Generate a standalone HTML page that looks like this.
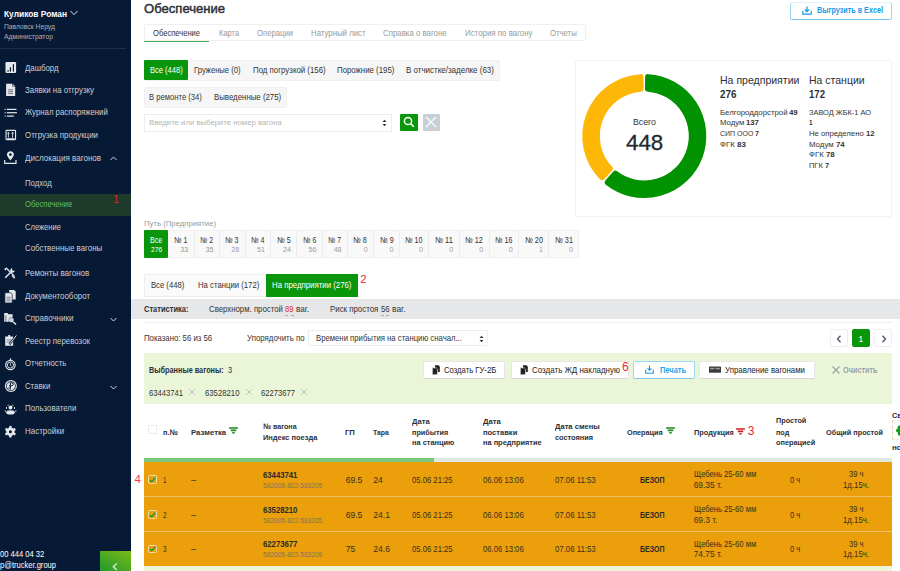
<!DOCTYPE html>
<html><head><meta charset="utf-8"><title>Обеспечение</title>
<style>
html,body{margin:0;padding:0;width:900px;height:571px;overflow:hidden;background:#fff;}
body{position:relative;font-family:"Liberation Sans",sans-serif;}
body>div,body>svg{position:absolute;}
.t{white-space:pre;}
.c{text-align:center;}
</style></head><body>
<div style="left:0.00px;top:0.00px;width:131.00px;height:571.00px;background:#071a35;"></div>
<div class="t" style="left:4.00px;top:8.81px;font-size:9.80px;line-height:9.80px;color:#ffffff;font-weight:bold;transform:scaleX(0.8548);transform-origin:0 0;">Куликов Роман</div>
<svg style="left:70px;top:10px" width="8" height="6" viewBox="0 0 8 6"><path d="M0.5 1 L4 4.6 L7.5 1" fill="none" stroke="#fff" stroke-width="0.9"/></svg>
<div class="t" style="left:4.00px;top:22.91px;font-size:7.26px;line-height:7.26px;color:#aab1bc;transform:scaleX(0.9313);transform-origin:0 0;">Павловск Неруд</div>
<div class="t" style="left:4.00px;top:33.11px;font-size:7.26px;line-height:7.26px;color:#aab1bc;transform:scaleX(0.9354);transform-origin:0 0;">Администратор</div>
<div style="left:0.00px;top:48.00px;width:126.00px;height:1.00px;background:#1f2d47;"></div>
<div style="left:0.00px;top:193.70px;width:131.00px;height:22.00px;background:#1e3a2b;"></div>
<div class="t" style="left:24.70px;top:63.50px;font-size:8.80px;line-height:8.80px;color:#c9ced6;transform:scaleX(0.8918);transform-origin:0 0;">Дашборд</div>
<div class="t" style="left:24.70px;top:86.00px;font-size:8.80px;line-height:8.80px;color:#c9ced6;transform:scaleX(0.9023);transform-origin:0 0;">Заявки на отгрузку</div>
<div class="t" style="left:24.70px;top:108.41px;font-size:8.80px;line-height:8.80px;color:#c9ced6;transform:scaleX(0.8862);transform-origin:0 0;">Журнал распоряжений</div>
<div class="t" style="left:24.70px;top:130.60px;font-size:8.80px;line-height:8.80px;color:#c9ced6;transform:scaleX(0.8977);transform-origin:0 0;">Отгрузка продукции</div>
<div class="t" style="left:24.70px;top:153.71px;font-size:8.80px;line-height:8.80px;color:#c9ced6;transform:scaleX(0.9134);transform-origin:0 0;">Дислокация вагонов</div>
<div class="t" style="left:24.70px;top:178.50px;font-size:8.80px;line-height:8.80px;color:#c9ced6;transform:scaleX(0.8845);transform-origin:0 0;">Подход</div>
<div class="t" style="left:24.70px;top:200.21px;font-size:8.80px;line-height:8.80px;color:#5fbf5f;transform:scaleX(0.8664);transform-origin:0 0;">Обеспечение</div>
<div class="t" style="left:24.70px;top:222.60px;font-size:8.80px;line-height:8.80px;color:#c9ced6;transform:scaleX(0.8625);transform-origin:0 0;">Слежение</div>
<div class="t" style="left:24.70px;top:244.41px;font-size:8.80px;line-height:8.80px;color:#c9ced6;transform:scaleX(0.8984);transform-origin:0 0;">Собственные вагоны</div>
<div class="t" style="left:24.70px;top:269.00px;font-size:8.80px;line-height:8.80px;color:#c9ced6;transform:scaleX(0.9083);transform-origin:0 0;">Ремонты вагонов</div>
<div class="t" style="left:24.70px;top:291.50px;font-size:8.80px;line-height:8.80px;color:#c9ced6;transform:scaleX(0.9006);transform-origin:0 0;">Документооборот</div>
<div class="t" style="left:24.70px;top:313.91px;font-size:8.80px;line-height:8.80px;color:#c9ced6;transform:scaleX(0.9079);transform-origin:0 0;">Справочники</div>
<div class="t" style="left:24.70px;top:336.71px;font-size:8.80px;line-height:8.80px;color:#c9ced6;transform:scaleX(0.8960);transform-origin:0 0;">Реестр перевозок</div>
<div class="t" style="left:24.70px;top:359.00px;font-size:8.80px;line-height:8.80px;color:#c9ced6;transform:scaleX(0.8813);transform-origin:0 0;">Отчетность</div>
<div class="t" style="left:24.70px;top:381.81px;font-size:8.80px;line-height:8.80px;color:#c9ced6;transform:scaleX(0.8839);transform-origin:0 0;">Ставки</div>
<div class="t" style="left:24.70px;top:404.21px;font-size:8.80px;line-height:8.80px;color:#c9ced6;transform:scaleX(0.8931);transform-origin:0 0;">Пользователи</div>
<div class="t" style="left:24.70px;top:427.21px;font-size:8.80px;line-height:8.80px;color:#c9ced6;transform:scaleX(0.9061);transform-origin:0 0;">Настройки</div>
<div class="t" style="left:113.00px;top:194.00px;font-size:11.00px;line-height:11.00px;color:#d8262c;font-family:"Liberation Mono",monospace;">1</div>
<svg style="left:110px;top:156px" width="7" height="5" viewBox="0 0 7 5"><path d="M0.5 4 L3.5 1 L6.5 4" fill="none" stroke="#d3d7de" stroke-width="1"/></svg>
<svg style="left:110px;top:317px" width="7" height="5" viewBox="0 0 7 5"><path d="M0.5 1 L3.5 4 L6.5 1" fill="none" stroke="#d3d7de" stroke-width="1"/></svg>
<svg style="left:110px;top:385px" width="7" height="5" viewBox="0 0 7 5"><path d="M0.5 1 L3.5 4 L6.5 1" fill="none" stroke="#d3d7de" stroke-width="1"/></svg>
<svg style="left:0;top:0" width="25" height="571" viewBox="0 0 25 571">
<rect x="5.5" y="62.1" width="10.6" height="10.9" rx="1.2" fill="#e4e7eb"/>
<rect x="7.4" y="70.2" width="1.3" height="1.4" fill="#071a35"/>
<rect x="9.8" y="67.2" width="1.2" height="4.4" fill="#071a35"/>
<rect x="12.8" y="64.2" width="1.2" height="7.4" fill="#071a35"/>
<path d="M6.1 83.7 H12.6 L15.2 86.3 V96 H6.1 Z" fill="#e4e7eb"/>
<path d="M12.6 83.7 V86.3 H15.2" fill="none" stroke="#071a35" stroke-width="0.6"/>
<rect x="8.2" y="89.3" width="4.8" height="1" fill="#6b7380"/>
<rect x="8.2" y="91.2" width="4.8" height="1" fill="#6b7380"/>
<rect x="8.2" y="93.1" width="4.8" height="0.9" fill="#6b7380"/>
<rect x="4.6" y="108.8" width="1.1" height="1.1" fill="#e4e7eb"/>
<rect x="6.9" y="108.8" width="9.6" height="1.2" fill="#e4e7eb"/>
<rect x="4.6" y="112.1" width="1.1" height="1.1" fill="#e4e7eb"/>
<rect x="6.9" y="112.1" width="10" height="1.2" fill="#e4e7eb"/>
<rect x="4.6" y="115.5" width="1.1" height="1.1" fill="#e4e7eb"/>
<rect x="6.9" y="115.5" width="6.9" height="1.2" fill="#e4e7eb"/>
<rect x="6.05" y="130.35" width="9.5" height="9.3" rx="0.6" fill="none" stroke="#e4e7eb" stroke-width="1.1"/>
<path d="M8.4 137.6 V132.3 M7.5 133.6 L8.4 132.2 L9.3 133.6 M12.6 137.6 V132.3 M11.7 133.6 L12.6 132.2 L13.5 133.6" stroke="#e4e7eb" stroke-width="0.9" fill="none"/>
<rect x="7.2" y="138" width="7.2" height="0.8" fill="#e4e7eb"/>
<path d="M10.4 151.2 C8.4 151.2 6.9 152.7 6.9 154.6 C6.9 156.7 10.4 160.5 10.4 160.5 C10.4 160.5 13.9 156.7 13.9 154.6 C13.9 152.7 12.4 151.2 10.4 151.2 Z" fill="#e4e7eb"/>
<circle cx="10.4" cy="154.6" r="1.3" fill="#071a35"/>
<path d="M4.7 160 V163.3 H16 V160" stroke="#e4e7eb" stroke-width="1.2" fill="none"/>
<path d="M5.6 270.2 L5.2 268.8 L6.4 268.3 L7.2 269 L14.6 276.4" stroke="#e4e7eb" stroke-width="1.3" fill="none"/>
<path d="M12.6 275 L15.3 277.7 L14.2 278.8 L11.5 276.1 Z" fill="#e4e7eb"/>
<path d="M5.2 277.8 L12 271" stroke="#e4e7eb" stroke-width="1.5"/>
<path d="M12.2 268.1 A2.3 2.3 0 1 0 14.9 270.6 L13.4 271 L12 269.8 Z" fill="#e4e7eb"/>
<path d="M9.2 290 H14.2 L15.7 291.5 V299.6 H9.2 Z" fill="#e4e7eb"/>
<path d="M4.9 292.7 H10.6 L12.2 294.3 V303 H4.9 Z" fill="#e4e7eb" stroke="#071a35" stroke-width="0.7"/>
<rect x="6.5" y="296.8" width="4" height="0.8" fill="#5d6675"/>
<rect x="6.5" y="298.7" width="4" height="0.8" fill="#5d6675"/>
<rect x="6.5" y="300.6" width="4" height="0.8" fill="#5d6675"/>
<path d="M4.2 313.1 H7.6 L8.4 314.2 H12.6 V321.8 H4.2 Z" fill="#e4e7eb"/>
<rect x="5.3" y="315.3" width="1.1" height="6.5" fill="#7a828e"/>
<circle cx="11.3" cy="319.9" r="2.6" fill="#071a35"/>
<circle cx="11.3" cy="319.9" r="2" fill="#c9ced6" stroke="#e4e7eb" stroke-width="0.9"/>
<path d="M13.1 321.8 L16 324.6" stroke="#e4e7eb" stroke-width="1.4"/>
<path d="M5.2 336.5 H8.2 V335 H10.2 V336.5 H13.2 V345.8 H5.2 Z" fill="#e4e7eb"/>
<rect x="6.6" y="339.5" width="4.5" height="0.8" fill="#6b7380"/>
<rect x="6.6" y="341.5" width="4" height="0.8" fill="#6b7380"/>
<path d="M9.5 344.2 L16.5 335.2" stroke="#071a35" stroke-width="2.2"/>
<path d="M9.8 343.9 L16.4 335.5" stroke="#e4e7eb" stroke-width="1"/>
<circle cx="10.4" cy="365" r="5.3" fill="#e4e7eb"/>
<path d="M9.4 361 L10.3 357.8 L11.6 360" fill="#e4e7eb"/>
<circle cx="10.4" cy="365" r="4.1" fill="#071a35"/>
<circle cx="10.4" cy="365" r="3.1" fill="none" stroke="#e4e7eb" stroke-width="0.9"/>
<path d="M10.3 362.8 V365.2 L11.8 366.4" stroke="#e4e7eb" stroke-width="0.8" fill="none"/>
<circle cx="10.9" cy="386.1" r="6" fill="#e4e7eb"/>
<circle cx="10.9" cy="386.1" r="4.9" fill="#071a35"/>
<circle cx="10.9" cy="386.1" r="4.2" fill="#e4e7eb"/>
<path d="M10.3 389.6 V382.8 H11.7 A1.5 1.5 0 0 1 11.7 385.8 H9" stroke="#071a35" stroke-width="1" fill="none"/>
<path d="M8.2 388 L10.3 388" stroke="#071a35" stroke-width="0.8"/>
<circle cx="10.5" cy="407.6" r="2" fill="#e4e7eb"/>
<path d="M7.4 406 A3.5 3.5 0 0 1 8.6 405" stroke="#e4e7eb" stroke-width="0.9" fill="none"/>
<path d="M13.6 406 A3.5 3.5 0 0 0 12.4 405" stroke="#e4e7eb" stroke-width="0.9" fill="none"/>
<path d="M6.5 407 V409" stroke="#e4e7eb" stroke-width="0.9"/>
<path d="M14.5 407 V409" stroke="#e4e7eb" stroke-width="0.9"/>
<ellipse cx="10.5" cy="412.4" rx="4.3" ry="2.1" fill="#e4e7eb"/>
<path d="M4.1 411 L5.4 410.2 L6 412 Z M16.9 411 L15.6 410.2 L15 412 Z" fill="#e4e7eb"/>
<g fill="#e4e7eb"><circle cx="10.4" cy="431.7" r="4.2"/>
<rect x="9.2" y="426" width="2.4" height="11.4" rx="0.5"/>
<rect x="9.2" y="426" width="2.4" height="11.4" rx="0.5" transform="rotate(60 10.4 431.7)"/>
<rect x="9.2" y="426" width="2.4" height="11.4" rx="0.5" transform="rotate(120 10.4 431.7)"/></g>
<circle cx="10.4" cy="431.7" r="1.5" fill="#071a35"/>
</svg>
<div class="t" style="left:0.00px;top:550.71px;font-size:8.25px;line-height:8.25px;color:#ffffff;transform:scaleX(0.9196);transform-origin:0 0;">00 444 04 32</div>
<div class="t" style="left:0.00px;top:561.60px;font-size:8.25px;line-height:8.25px;color:#ffffff;transform:scaleX(0.9163);transform-origin:0 0;">p@trucker.group</div>
<div style="left:100.00px;top:551.00px;width:31.00px;height:20.00px;background:linear-gradient(30deg,#1e9a2c 0%,#4eaa22 50%,#7cba14 100%);"></div>
<svg style="left:112px;top:563px" width="6" height="8" viewBox="0 0 6 8"><path d="M4.8 0.6 L1.3 3.8 L4.8 7.0" fill="none" stroke="#e2e4e6" stroke-width="1.4"/></svg>
<div class="t" style="left:144.40px;top:2.32px;font-size:13.20px;line-height:13.20px;color:#2b3038;-webkit-text-stroke:0.45px #2b3038;transform:scaleX(0.9915);transform-origin:0 0;">Обеспечение</div>
<div style="left:790.40px;top:2.00px;width:101.60px;height:17.90px;border:1px solid #9fd8f6;border-top-color:#e0f3fc;border-bottom:1.6px solid #7cc8f2;border-radius:2px;box-sizing:border-box;background:#fff;"></div>
<svg style="left:802px;top:6px" width="10" height="9" viewBox="0 0 10 9"><path d="M5 0.5 V5.5 M2.8 3.5 L5 5.7 L7.2 3.5" stroke="#1a9ae6" stroke-width="1.2" fill="none"/><path d="M0.8 5 V8.2 H9.2 V5" stroke="#1a9ae6" stroke-width="1.2" fill="none"/></svg>
<div class="t" style="left:817.00px;top:6.31px;font-size:8.58px;line-height:8.58px;color:#1a9ae6;font-weight:bold;transform:scaleX(0.8422);transform-origin:0 0;">Выгрузить в Excel</div>
<div style="left:144.00px;top:23.80px;width:441.70px;height:17.60px;border:1px solid #efefef;border-radius:2px;box-sizing:border-box;background:#fff;"></div>
<div style="left:144.00px;top:40.50px;width:65.30px;height:1.40px;background:#45ad4f;"></div>
<div class="t" style="left:153.30px;top:28.60px;font-size:8.80px;line-height:8.80px;color:#333;transform:scaleX(0.8627);transform-origin:0 0;">Обеспечение</div>
<div class="t" style="left:218.70px;top:28.60px;font-size:8.80px;line-height:8.80px;color:#999;transform:scaleX(0.8578);transform-origin:0 0;">Карта</div>
<div class="t" style="left:257.00px;top:28.60px;font-size:8.80px;line-height:8.80px;color:#999;transform:scaleX(0.8745);transform-origin:0 0;">Операции</div>
<div class="t" style="left:310.70px;top:28.60px;font-size:8.80px;line-height:8.80px;color:#999;transform:scaleX(0.8891);transform-origin:0 0;">Натурный лист</div>
<div class="t" style="left:383.00px;top:28.60px;font-size:8.80px;line-height:8.80px;color:#999;transform:scaleX(0.8916);transform-origin:0 0;">Справка о вагоне</div>
<div class="t" style="left:464.70px;top:28.60px;font-size:8.80px;line-height:8.80px;color:#999;transform:scaleX(0.8975);transform-origin:0 0;">История по вагону</div>
<div class="t" style="left:550.00px;top:28.60px;font-size:8.80px;line-height:8.80px;color:#999;transform:scaleX(0.8778);transform-origin:0 0;">Отчеты</div>
<div style="left:144.00px;top:59.60px;width:355.90px;height:21.00px;background:#f6f6f6;border:1px solid #efefef;border-radius:2px;box-sizing:border-box;"></div>
<div style="left:144.00px;top:60.10px;width:44.40px;height:19.80px;background:#0a960a;border-radius:1px;"></div>
<div class="t" style="left:150.00px;top:65.91px;font-size:8.30px;line-height:8.30px;color:#ffffff;transform:scaleX(0.9087);transform-origin:0 0;">Все (448)</div>
<div class="t" style="left:194.40px;top:65.91px;font-size:8.30px;line-height:8.30px;color:#333;transform:scaleX(0.9213);transform-origin:0 0;">Груженые (0)</div>
<div class="t" style="left:252.90px;top:65.91px;font-size:8.30px;line-height:8.30px;color:#333;transform:scaleX(0.9463);transform-origin:0 0;">Под погрузкой (156)</div>
<div class="t" style="left:337.30px;top:65.91px;font-size:8.30px;line-height:8.30px;color:#333;transform:scaleX(0.9442);transform-origin:0 0;">Порожние (195)</div>
<div class="t" style="left:406.00px;top:65.91px;font-size:8.30px;line-height:8.30px;color:#333;transform:scaleX(0.9618);transform-origin:0 0;">В отчистке/заделке (63)</div>
<div style="left:144.00px;top:86.90px;width:142.70px;height:20.80px;background:#f6f6f6;border:1px solid #efefef;border-radius:2px;box-sizing:border-box;"></div>
<div class="t" style="left:149.30px;top:92.81px;font-size:8.30px;line-height:8.30px;color:#333;transform:scaleX(0.9220);transform-origin:0 0;">В ремонте (34)</div>
<div class="t" style="left:213.80px;top:92.81px;font-size:8.30px;line-height:8.30px;color:#333;transform:scaleX(0.9446);transform-origin:0 0;">Выведенные (275)</div>
<div style="left:144.00px;top:113.90px;width:248.30px;height:17.80px;border:1px solid #ededed;box-sizing:border-box;background:#fff;"></div>
<div class="t" style="left:149.00px;top:119.21px;font-size:7.92px;line-height:7.92px;color:#b5b5b5;transform:scaleX(0.9789);transform-origin:0 0;">Введите или выберите номер вагона</div>
<svg style="left:382px;top:119px" width="5" height="8" viewBox="0 0 5 8"><path d="M0.5 3 L2.5 0.8 L4.5 3 Z M0.5 5 L2.5 7.2 L4.5 5 Z" fill="#333"/></svg>
<div style="left:400.40px;top:113.90px;width:17.80px;height:17.30px;background:#0a960a;border-radius:1px;"></div>
<svg style="left:403px;top:116px" width="12" height="12" viewBox="0 0 12 12"><circle cx="5" cy="5" r="3.6" stroke="#fff" stroke-width="1.5" fill="none"/><path d="M7.6 7.6 L10.8 10.8" stroke="#fff" stroke-width="1.6"/></svg>
<div style="left:422.90px;top:113.90px;width:17.10px;height:17.30px;background:#c9d0d5;border-radius:1px;"></div>
<svg style="left:425px;top:116px" width="12" height="12" viewBox="0 0 12 12"><path d="M1 1 L11 11 M11 1 L1 11" stroke="#fff" stroke-width="1.1"/></svg>
<div style="left:575.00px;top:60.20px;width:317.00px;height:157.30px;border:1px solid #f3f3f3;border-radius:2px;box-sizing:border-box;background:#fff;"></div>
<svg style="left:575px;top:60px" width="140" height="150" viewBox="0 0 140 150"><path d="M73.12 17.12 A59.0 59.0 0 1 1 32.74 122.31 L40.33 113.64 A47.5 47.5 0 1 0 72.96 28.64 Z" fill="#009200" stroke="#009200" stroke-width="6.0" stroke-linejoin="round"/><path d="M26.99 117.12 A59.0 59.0 0 0 1 65.48 17.12 L65.64 28.64 A47.5 47.5 0 0 0 34.83 108.68 Z" fill="#fdb706" stroke="#fdb706" stroke-width="6.0" stroke-linejoin="round"/></svg>
<div class="t" style="left:633.00px;top:117.71px;font-size:9.00px;line-height:9.00px;color:#333;transform:scaleX(0.9746);transform-origin:0 0;">Всего</div>
<div class="t" style="left:625.70px;top:131.81px;font-size:22.60px;line-height:22.60px;color:#23292f;-webkit-text-stroke:0.3px #23292f;transform:scaleX(0.9892);transform-origin:0 0;">448</div>
<div class="t" style="left:719.60px;top:75.00px;font-size:10.50px;line-height:10.50px;color:#2b3038;transform:scaleX(1.0023);transform-origin:0 0;">На предприятии</div>
<div class="t" style="left:719.60px;top:89.21px;font-size:10.50px;line-height:10.50px;color:#2b3038;font-weight:bold;transform:scaleX(0.9361);transform-origin:0 0;">276</div>
<div class="t" style="left:809.00px;top:75.00px;font-size:10.50px;line-height:10.50px;color:#2b3038;transform:scaleX(0.9989);transform-origin:0 0;">На станции</div>
<div class="t" style="left:809.00px;top:89.21px;font-size:10.50px;line-height:10.50px;color:#2b3038;font-weight:bold;transform:scaleX(0.9133);transform-origin:0 0;">172</div>
<div class="t" style="left:719.60px;top:108.60px;font-size:8.00px;line-height:8.00px;color:#333;transform:scaleX(0.9751);transform-origin:0 0;">Белгороддорстрой </div>
<div class="t" style="left:789.32px;top:108.60px;font-size:8.00px;line-height:8.00px;color:#333;font-weight:bold;transform:scaleX(0.9751);transform-origin:0 0;">49</div>
<div class="t" style="left:719.60px;top:119.31px;font-size:8.00px;line-height:8.00px;color:#333;transform:scaleX(0.9686);transform-origin:0 0;">Модум </div>
<div class="t" style="left:746.07px;top:119.31px;font-size:8.00px;line-height:8.00px;color:#333;font-weight:bold;transform:scaleX(0.9686);transform-origin:0 0;">137</div>
<div class="t" style="left:719.60px;top:130.01px;font-size:8.00px;line-height:8.00px;color:#333;transform:scaleX(0.8765);transform-origin:0 0;">СИП ООО </div>
<div class="t" style="left:755.00px;top:130.01px;font-size:8.00px;line-height:8.00px;color:#333;font-weight:bold;transform:scaleX(0.8765);transform-origin:0 0;">7</div>
<div class="t" style="left:719.60px;top:140.72px;font-size:8.00px;line-height:8.00px;color:#333;transform:scaleX(0.9887);transform-origin:0 0;">ФГК </div>
<div class="t" style="left:736.70px;top:140.72px;font-size:8.00px;line-height:8.00px;color:#333;font-weight:bold;transform:scaleX(0.9887);transform-origin:0 0;">83</div>
<div class="t" style="left:809.00px;top:108.60px;font-size:8.00px;line-height:8.00px;color:#333;transform:scaleX(0.9262);transform-origin:0 0;">ЗАВОД ЖБК-1 АО</div>
<div class="t" style="left:809.00px;top:119.31px;font-size:8.00px;line-height:8.00px;color:#333;font-weight:bold;transform:scaleX(0.7866);transform-origin:0 0;">1</div>
<div class="t" style="left:809.00px;top:130.01px;font-size:8.00px;line-height:8.00px;color:#333;transform:scaleX(0.9630);transform-origin:0 0;">Не определено </div>
<div class="t" style="left:865.83px;top:130.01px;font-size:8.00px;line-height:8.00px;color:#333;font-weight:bold;transform:scaleX(0.9630);transform-origin:0 0;">12</div>
<div class="t" style="left:809.00px;top:140.72px;font-size:8.00px;line-height:8.00px;color:#333;transform:scaleX(0.9799);transform-origin:0 0;">Модум </div>
<div class="t" style="left:835.78px;top:140.72px;font-size:8.00px;line-height:8.00px;color:#333;font-weight:bold;transform:scaleX(0.9799);transform-origin:0 0;">74</div>
<div class="t" style="left:809.00px;top:151.41px;font-size:8.00px;line-height:8.00px;color:#333;transform:scaleX(0.9735);transform-origin:0 0;">ФГК </div>
<div class="t" style="left:825.84px;top:151.41px;font-size:8.00px;line-height:8.00px;color:#333;font-weight:bold;transform:scaleX(0.9735);transform-origin:0 0;">78</div>
<div class="t" style="left:809.00px;top:162.10px;font-size:8.00px;line-height:8.00px;color:#333;transform:scaleX(0.9340);transform-origin:0 0;">ПГК </div>
<div class="t" style="left:824.84px;top:162.10px;font-size:8.00px;line-height:8.00px;color:#333;font-weight:bold;transform:scaleX(0.9340);transform-origin:0 0;">7</div>
<div class="t" style="left:144.00px;top:219.80px;font-size:7.92px;line-height:7.92px;color:#9a9a9a;transform:scaleX(0.9797);transform-origin:0 0;">Путь (Предприятие)</div>
<div style="left:144.00px;top:230.20px;width:434.90px;height:28.20px;background:#f9f9f9;border:1px solid #f0f0f0;box-sizing:border-box;"></div>
<div style="left:144.00px;top:230.20px;width:24.40px;height:28.20px;background:#0a960a;border-radius:1px;"></div>
<div class="t" style="left:150.00px;top:235.71px;font-size:8.80px;line-height:8.80px;color:#fff;transform:scaleX(0.8045);transform-origin:0 0;">Все</div>
<div class="t" style="left:150.70px;top:246.01px;font-size:7.48px;line-height:7.48px;color:#fff;transform:scaleX(0.9054);transform-origin:0 0;">276</div>
<div style="left:193.50px;top:230.20px;width:0.80px;height:28.20px;background:#ededed;"></div>
<div class="t" style="left:174.40px;top:235.50px;font-size:8.80px;line-height:8.80px;color:#333;transform:scaleX(0.7986);transform-origin:0 0;">№ 1</div>
<div class="t" style="left:180.25px;top:246.91px;font-size:7.15px;line-height:7.15px;color:#9a9a9a;">33</div>
<div style="left:218.80px;top:230.20px;width:0.80px;height:28.20px;background:#ededed;"></div>
<div class="t" style="left:200.00px;top:235.50px;font-size:8.80px;line-height:8.80px;color:#333;transform:scaleX(0.7807);transform-origin:0 0;">№ 2</div>
<div class="t" style="left:205.55px;top:246.91px;font-size:7.15px;line-height:7.15px;color:#9a9a9a;">35</div>
<div style="left:244.50px;top:230.20px;width:0.80px;height:28.20px;background:#ededed;"></div>
<div class="t" style="left:225.30px;top:235.50px;font-size:8.80px;line-height:8.80px;color:#333;transform:scaleX(0.8046);transform-origin:0 0;">№ 3</div>
<div class="t" style="left:231.25px;top:246.91px;font-size:7.15px;line-height:7.15px;color:#9a9a9a;">28</div>
<div style="left:270.20px;top:230.20px;width:0.80px;height:28.20px;background:#ededed;"></div>
<div class="t" style="left:251.00px;top:235.50px;font-size:8.80px;line-height:8.80px;color:#333;transform:scaleX(0.8046);transform-origin:0 0;">№ 4</div>
<div class="t" style="left:256.95px;top:246.91px;font-size:7.15px;line-height:7.15px;color:#9a9a9a;">51</div>
<div style="left:296.20px;top:230.20px;width:0.80px;height:28.20px;background:#ededed;"></div>
<div class="t" style="left:276.70px;top:235.50px;font-size:8.80px;line-height:8.80px;color:#333;transform:scaleX(0.8225);transform-origin:0 0;">№ 5</div>
<div class="t" style="left:282.95px;top:246.91px;font-size:7.15px;line-height:7.15px;color:#9a9a9a;">24</div>
<div style="left:321.70px;top:230.20px;width:0.80px;height:28.20px;background:#ededed;"></div>
<div class="t" style="left:302.70px;top:235.50px;font-size:8.80px;line-height:8.80px;color:#333;transform:scaleX(0.7927);transform-origin:0 0;">№ 6</div>
<div class="t" style="left:308.45px;top:246.91px;font-size:7.15px;line-height:7.15px;color:#9a9a9a;">56</div>
<div style="left:346.90px;top:230.20px;width:0.80px;height:28.20px;background:#ededed;"></div>
<div class="t" style="left:328.20px;top:235.50px;font-size:8.80px;line-height:8.80px;color:#333;transform:scaleX(0.7748);transform-origin:0 0;">№ 7</div>
<div class="t" style="left:333.65px;top:246.91px;font-size:7.15px;line-height:7.15px;color:#9a9a9a;">48</div>
<div style="left:373.00px;top:230.20px;width:0.80px;height:28.20px;background:#ededed;"></div>
<div class="t" style="left:353.40px;top:235.50px;font-size:8.80px;line-height:8.80px;color:#333;transform:scaleX(0.8284);transform-origin:0 0;">№ 8</div>
<div class="t" style="left:363.72px;top:246.91px;font-size:7.15px;line-height:7.15px;color:#9a9a9a;">0</div>
<div style="left:398.80px;top:230.20px;width:0.80px;height:28.20px;background:#ededed;"></div>
<div class="t" style="left:379.50px;top:235.50px;font-size:8.80px;line-height:8.80px;color:#333;transform:scaleX(0.8105);transform-origin:0 0;">№ 9</div>
<div class="t" style="left:389.52px;top:246.91px;font-size:7.15px;line-height:7.15px;color:#9a9a9a;">0</div>
<div style="left:428.40px;top:230.20px;width:0.80px;height:28.20px;background:#ededed;"></div>
<div class="t" style="left:405.30px;top:235.50px;font-size:8.80px;line-height:8.80px;color:#333;transform:scaleX(0.8028);transform-origin:0 0;">№ 10</div>
<div class="t" style="left:419.12px;top:246.91px;font-size:7.15px;line-height:7.15px;color:#9a9a9a;">0</div>
<div style="left:458.50px;top:230.20px;width:0.80px;height:28.20px;background:#ededed;"></div>
<div class="t" style="left:434.90px;top:235.50px;font-size:8.80px;line-height:8.80px;color:#333;transform:scaleX(0.8516);transform-origin:0 0;">№ 11</div>
<div class="t" style="left:449.22px;top:246.91px;font-size:7.15px;line-height:7.15px;color:#9a9a9a;">0</div>
<div style="left:488.50px;top:230.20px;width:0.80px;height:28.20px;background:#ededed;"></div>
<div class="t" style="left:465.00px;top:235.50px;font-size:8.80px;line-height:8.80px;color:#333;transform:scaleX(0.8213);transform-origin:0 0;">№ 12</div>
<div class="t" style="left:479.22px;top:246.91px;font-size:7.15px;line-height:7.15px;color:#9a9a9a;">0</div>
<div style="left:518.00px;top:230.20px;width:0.80px;height:28.20px;background:#ededed;"></div>
<div class="t" style="left:495.00px;top:235.50px;font-size:8.80px;line-height:8.80px;color:#333;transform:scaleX(0.7982);transform-origin:0 0;">№ 16</div>
<div class="t" style="left:508.72px;top:246.91px;font-size:7.15px;line-height:7.15px;color:#9a9a9a;">0</div>
<div style="left:548.20px;top:230.20px;width:0.80px;height:28.20px;background:#ededed;"></div>
<div class="t" style="left:524.50px;top:235.50px;font-size:8.80px;line-height:8.80px;color:#333;transform:scaleX(0.8305);transform-origin:0 0;">№ 20</div>
<div class="t" style="left:538.92px;top:246.91px;font-size:7.15px;line-height:7.15px;color:#9a9a9a;">1</div>
<div style="left:578.40px;top:230.20px;width:0.80px;height:28.20px;background:#ededed;"></div>
<div class="t" style="left:554.70px;top:235.50px;font-size:8.80px;line-height:8.80px;color:#333;transform:scaleX(0.8305);transform-origin:0 0;">№ 31</div>
<div class="t" style="left:569.12px;top:246.91px;font-size:7.15px;line-height:7.15px;color:#9a9a9a;">0</div>
<div style="left:144.30px;top:274.30px;width:214.20px;height:22.40px;background:#fafafa;border:1px solid #efefef;box-sizing:border-box;"></div>
<div style="left:265.70px;top:274.30px;width:92.80px;height:22.40px;background:#0a960a;"></div>
<div class="t" style="left:151.00px;top:281.21px;font-size:8.80px;line-height:8.80px;color:#333;transform:scaleX(0.8728);transform-origin:0 0;">Все (448)</div>
<div class="t" style="left:197.70px;top:281.21px;font-size:8.80px;line-height:8.80px;color:#333;transform:scaleX(0.8802);transform-origin:0 0;">На станции (172)</div>
<div class="t" style="left:272.30px;top:281.21px;font-size:8.80px;line-height:8.80px;color:#fff;transform:scaleX(0.8894);transform-origin:0 0;">На предприятии (276)</div>
<div class="t" style="left:360.30px;top:274.11px;font-size:11.50px;line-height:11.50px;color:#e8283a;">2</div>
<div style="left:131.00px;top:299.20px;width:769.00px;height:20.00px;background:#e6e7e9;"></div>
<div class="t" style="left:143.80px;top:304.71px;font-size:8.58px;line-height:8.58px;color:#2b3038;font-weight:bold;transform:scaleX(0.8756);transform-origin:0 0;">Статистика:</div>
<div class="t" style="left:208.90px;top:304.71px;font-size:8.58px;line-height:8.58px;color:#333;transform:scaleX(0.9099);transform-origin:0 0;">Сверхнорм. простой</div>
<div class="t" style="left:285.20px;top:304.71px;font-size:8.58px;line-height:8.58px;color:#e0302a;transform:scaleX(0.9011);transform-origin:0 0;">89</div>
<div class="t" style="left:296.10px;top:304.71px;font-size:8.58px;line-height:8.58px;color:#333;transform:scaleX(0.9562);transform-origin:0 0;">ваг.</div>
<div style="left:285.20px;top:314.60px;width:3.20px;height:0.80px;background:#f09090;"></div>
<div style="left:290.60px;top:314.60px;width:3.20px;height:0.80px;background:#f09090;"></div>
<div class="t" style="left:330.20px;top:304.71px;font-size:8.58px;line-height:8.58px;color:#333;transform:scaleX(0.9170);transform-origin:0 0;">Риск простоя</div>
<div class="t" style="left:380.80px;top:304.71px;font-size:8.58px;line-height:8.58px;color:#333;transform:scaleX(0.9116);transform-origin:0 0;">56</div>
<div class="t" style="left:391.80px;top:304.71px;font-size:8.58px;line-height:8.58px;color:#333;transform:scaleX(0.9854);transform-origin:0 0;">ваг.</div>
<div style="left:380.80px;top:314.60px;width:3.20px;height:0.80px;background:#aaa;"></div>
<div style="left:386.30px;top:314.60px;width:3.20px;height:0.80px;background:#aaa;"></div>
<div style="left:144.00px;top:322.00px;width:748.00px;height:0.80px;background:#efefef;"></div>
<div class="t" style="left:144.00px;top:333.71px;font-size:8.36px;line-height:8.36px;color:#333;transform:scaleX(0.9331);transform-origin:0 0;">Показано: 56 из 56</div>
<div class="t" style="left:247.30px;top:333.71px;font-size:8.36px;line-height:8.36px;color:#333;transform:scaleX(0.9421);transform-origin:0 0;">Упорядочить по</div>
<div style="left:307.80px;top:330.00px;width:180.60px;height:16.20px;border:1px solid #eeeeee;box-sizing:border-box;background:#fff;"></div>
<div class="t" style="left:315.60px;top:333.71px;font-size:8.36px;line-height:8.36px;color:#333;transform:scaleX(0.9264);transform-origin:0 0;">Времени прибытия на станцию сначал...</div>
<svg style="left:478.5px;top:334.5px" width="5" height="8" viewBox="0 0 5 8"><path d="M0.5 3 L2.5 0.8 L4.5 3 Z M0.5 5 L2.5 7.2 L4.5 5 Z" fill="#333"/></svg>
<div style="left:830.20px;top:329.20px;width:17.60px;height:17.70px;border:1px solid #eceef0;box-sizing:border-box;border-radius:2px;background:#fff;"></div>
<svg style="left:836px;top:334.5px" width="6" height="8" viewBox="0 0 6 8"><path d="M4.5 0.8 L1.5 4 L4.5 7.2" fill="none" stroke="#4a5568" stroke-width="1.3"/></svg>
<div style="left:852.20px;top:329.20px;width:17.80px;height:17.70px;background:#0a960a;border-radius:2px;"></div>
<div class="t" style="left:858.80px;top:334.60px;font-size:9.02px;line-height:9.02px;color:#fff;-webkit-text-stroke:0.2px #fff;transform:scaleX(0.7575);transform-origin:0 0;">1</div>
<div style="left:874.20px;top:329.20px;width:17.80px;height:17.70px;border:1px solid #eceef0;box-sizing:border-box;border-radius:2px;background:#fff;"></div>
<svg style="left:880.5px;top:334.5px" width="6" height="8" viewBox="0 0 6 8"><path d="M1.5 0.8 L4.5 4 L1.5 7.2" fill="none" stroke="#4a5568" stroke-width="1.3"/></svg>
<div style="left:144.00px;top:353.30px;width:748.00px;height:51.20px;background:#ebf6d9;"></div>
<div class="t" style="left:149.30px;top:365.90px;font-size:8.58px;line-height:8.58px;color:#2b3038;font-weight:bold;transform:scaleX(0.8519);transform-origin:0 0;">Выбранные вагоны:</div>
<div class="t" style="left:228.40px;top:365.90px;font-size:8.58px;line-height:8.58px;color:#333;transform:scaleX(0.8592);transform-origin:0 0;">3</div>
<div class="t" style="left:149.30px;top:389.00px;font-size:8.58px;line-height:8.58px;color:#333;transform:scaleX(0.8906);transform-origin:0 0;">63443741</div>
<svg style="left:189.30px;top:388.5px" width="6" height="6" viewBox="0 0 6 6"><path d="M0.5 0.5 L5.5 5.5 M5.5 0.5 L0.5 5.5" stroke="#b9bfc6" stroke-width="1"/></svg>
<div class="t" style="left:205.10px;top:389.00px;font-size:8.58px;line-height:8.58px;color:#333;transform:scaleX(0.9037);transform-origin:0 0;">63528210</div>
<svg style="left:245.80px;top:388.5px" width="6" height="6" viewBox="0 0 6 6"><path d="M0.5 0.5 L5.5 5.5 M5.5 0.5 L0.5 5.5" stroke="#b9bfc6" stroke-width="1"/></svg>
<div class="t" style="left:261.00px;top:389.00px;font-size:8.58px;line-height:8.58px;color:#333;transform:scaleX(0.8906);transform-origin:0 0;">62273677</div>
<svg style="left:301.00px;top:388.5px" width="6" height="6" viewBox="0 0 6 6"><path d="M0.5 0.5 L5.5 5.5 M5.5 0.5 L0.5 5.5" stroke="#b9bfc6" stroke-width="1"/></svg>
<div style="left:422.50px;top:360.50px;width:82.80px;height:18.90px;background:#fff;border:1px solid #e6e6e6;border-bottom-color:#d6d6d6;box-sizing:border-box;border-radius:2px;"></div>
<div style="left:510.60px;top:360.50px;width:118.80px;height:18.90px;background:#fff;border:1px solid #e6e6e6;border-bottom-color:#d6d6d6;box-sizing:border-box;border-radius:2px;"></div>
<div style="left:633.40px;top:360.50px;width:61.20px;height:18.90px;background:#fff;border:1px solid #9ad6f5;border-bottom:1.4px solid #7ccaf2;box-sizing:border-box;border-radius:2px;"></div>
<div style="left:699.40px;top:360.50px;width:115.20px;height:18.90px;background:#fff;border:1px solid #e6e6e6;border-bottom-color:#d6d6d6;box-sizing:border-box;border-radius:2px;"></div>
<svg style="left:431.7px;top:364.5px" width="8" height="10" viewBox="0 0 8 10"><path d="M3 0.3 H6.5 L7.8 1.6 V7 H3 Z" fill="#222"/><path d="M0.3 2.8 H4.2 L5.5 4.1 V9.7 H0.3 Z" fill="#222" stroke="#fff" stroke-width="0.6"/></svg>
<svg style="left:519.7px;top:364.5px" width="8" height="10" viewBox="0 0 8 10"><path d="M3 0.3 H6.5 L7.8 1.6 V7 H3 Z" fill="#222"/><path d="M0.3 2.8 H4.2 L5.5 4.1 V9.7 H0.3 Z" fill="#222" stroke="#fff" stroke-width="0.6"/></svg>
<div class="t" style="left:443.90px;top:366.10px;font-size:8.58px;line-height:8.58px;color:#222;transform:scaleX(0.8946);transform-origin:0 0;">Создать ГУ-2Б</div>
<div class="t" style="left:531.70px;top:366.10px;font-size:8.58px;line-height:8.58px;color:#222;transform:scaleX(0.9291);transform-origin:0 0;">Создать ЖД накладную</div>
<div class="t" style="left:622.00px;top:360.82px;font-size:12.00px;line-height:12.00px;color:#ec2a38;">6</div>
<svg style="left:645.4px;top:365px" width="9" height="9" viewBox="0 0 9 9"><path d="M4.5 0.5 V5.2 M2.5 3.3 L4.5 5.3 L6.5 3.3" stroke="#1a9ae6" stroke-width="1.1" fill="none"/><path d="M0.7 4.8 V8.2 H8.3 V4.8" stroke="#1a9ae6" stroke-width="1.1" fill="none"/></svg>
<div class="t" style="left:659.50px;top:366.10px;font-size:8.58px;line-height:8.58px;color:#2aa2e8;font-weight:bold;transform:scaleX(0.8713);transform-origin:0 0;">Печать</div>
<svg style="left:709px;top:366px" width="12" height="7" viewBox="0 0 12 7"><rect x="0" y="0.5" width="12" height="5.5" rx="0.6" fill="#3a3a3a"/><rect x="1.2" y="1.8" width="4.2" height="1.6" fill="#9a9a9a"/><rect x="6.6" y="1.8" width="4.2" height="1.6" fill="#9a9a9a"/><rect x="0" y="6" width="12" height="1" fill="#777"/></svg>
<div class="t" style="left:725.00px;top:366.10px;font-size:8.58px;line-height:8.58px;color:#222;transform:scaleX(0.9171);transform-origin:0 0;">Управление вагонами</div>
<svg style="left:832px;top:365.8px" width="8" height="8" viewBox="0 0 8 8"><path d="M0.5 0.5 L7.5 7.5 M7.5 0.5 L0.5 7.5" stroke="#9aa0a6" stroke-width="1.1"/></svg>
<div class="t" style="left:843.40px;top:366.10px;font-size:8.58px;line-height:8.58px;color:#9ba1a7;font-weight:bold;transform:scaleX(0.8511);transform-origin:0 0;">Очистить</div>
<div style="left:148.00px;top:425.40px;width:8.70px;height:8.40px;border:1px solid #ececec;box-sizing:border-box;background:#fff;"></div>
<div class="t" style="left:163.00px;top:428.72px;font-size:8.00px;line-height:8.00px;color:#2b3038;font-weight:bold;transform:scaleX(0.9266);transform-origin:0 0;">п.№</div>
<div class="t" style="left:190.80px;top:428.72px;font-size:8.00px;line-height:8.00px;color:#2b3038;font-weight:bold;transform:scaleX(0.9727);transform-origin:0 0;">Разметка</div>
<svg style="left:229.2px;top:427.4px" width="9" height="7" viewBox="0 0 9 7"><rect x="0" y="0.2" width="9" height="1.6" rx="0.5" fill="#1a861e"/><rect x="1.7" y="2.6" width="5.6" height="1.6" rx="0.5" fill="#1a861e"/><rect x="3.2" y="5.0" width="2.6" height="1.6" rx="0.5" fill="#1a861e"/></svg>
<div class="t" style="left:262.70px;top:423.22px;font-size:8.00px;line-height:8.00px;color:#2b3038;font-weight:bold;transform:scaleX(0.8890);transform-origin:0 0;">№ вагона</div>
<div class="t" style="left:262.70px;top:433.91px;font-size:8.00px;line-height:8.00px;color:#2b3038;font-weight:bold;transform:scaleX(0.9306);transform-origin:0 0;">Индекс поезда</div>
<div class="t" style="left:345.40px;top:428.72px;font-size:8.00px;line-height:8.00px;color:#2b3038;font-weight:bold;transform:scaleX(0.9528);transform-origin:0 0;">ГП</div>
<div class="t" style="left:373.40px;top:428.72px;font-size:8.00px;line-height:8.00px;color:#2b3038;font-weight:bold;transform:scaleX(0.8607);transform-origin:0 0;">Тара</div>
<div class="t" style="left:411.80px;top:417.81px;font-size:8.00px;line-height:8.00px;color:#2b3038;font-weight:bold;transform:scaleX(0.9559);transform-origin:0 0;">Дата</div>
<div class="t" style="left:411.80px;top:428.51px;font-size:8.00px;line-height:8.00px;color:#2b3038;font-weight:bold;transform:scaleX(0.9069);transform-origin:0 0;">прибытия</div>
<div class="t" style="left:411.80px;top:438.91px;font-size:8.00px;line-height:8.00px;color:#2b3038;font-weight:bold;transform:scaleX(0.9253);transform-origin:0 0;">на станцию</div>
<div class="t" style="left:483.20px;top:417.81px;font-size:8.00px;line-height:8.00px;color:#2b3038;font-weight:bold;transform:scaleX(0.9613);transform-origin:0 0;">Дата</div>
<div class="t" style="left:483.20px;top:428.51px;font-size:8.00px;line-height:8.00px;color:#2b3038;font-weight:bold;transform:scaleX(0.9457);transform-origin:0 0;">поставки</div>
<div class="t" style="left:483.20px;top:438.91px;font-size:8.00px;line-height:8.00px;color:#2b3038;font-weight:bold;transform:scaleX(0.9252);transform-origin:0 0;">на предприятие</div>
<div class="t" style="left:555.40px;top:423.01px;font-size:8.00px;line-height:8.00px;color:#2b3038;font-weight:bold;transform:scaleX(0.9488);transform-origin:0 0;">Дата смены</div>
<div class="t" style="left:555.40px;top:433.72px;font-size:8.00px;line-height:8.00px;color:#2b3038;font-weight:bold;transform:scaleX(0.9212);transform-origin:0 0;">состояния</div>
<div class="t" style="left:626.80px;top:428.60px;font-size:8.00px;line-height:8.00px;color:#2b3038;font-weight:bold;transform:scaleX(0.9099);transform-origin:0 0;">Операция</div>
<svg style="left:665.8px;top:427.4px" width="9" height="7" viewBox="0 0 9 7"><rect x="0" y="0.2" width="9" height="1.6" rx="0.5" fill="#1a861e"/><rect x="1.7" y="2.6" width="5.6" height="1.6" rx="0.5" fill="#1a861e"/><rect x="3.2" y="5.0" width="2.6" height="1.6" rx="0.5" fill="#1a861e"/></svg>
<div class="t" style="left:693.70px;top:428.60px;font-size:8.00px;line-height:8.00px;color:#2b3038;font-weight:bold;transform:scaleX(0.9162);transform-origin:0 0;">Продукция</div>
<svg style="left:736.3px;top:427.5px" width="9" height="7" viewBox="0 0 9 7"><rect x="0" y="0.2" width="9" height="1.6" rx="0.5" fill="#c8201f"/><rect x="1.7" y="2.6" width="5.6" height="1.6" rx="0.5" fill="#c8201f"/><rect x="3.2" y="5.0" width="2.6" height="1.6" rx="0.5" fill="#c8201f"/></svg>
<div class="t" style="left:747.70px;top:424.71px;font-size:12.00px;line-height:12.00px;color:#e8283a;">3</div>
<div class="t" style="left:776.20px;top:417.01px;font-size:8.00px;line-height:8.00px;color:#2b3038;font-weight:bold;transform:scaleX(0.9049);transform-origin:0 0;">Простой</div>
<div class="t" style="left:776.20px;top:428.60px;font-size:8.00px;line-height:8.00px;color:#2b3038;font-weight:bold;transform:scaleX(0.9053);transform-origin:0 0;">под</div>
<div class="t" style="left:776.20px;top:439.41px;font-size:8.00px;line-height:8.00px;color:#2b3038;font-weight:bold;transform:scaleX(0.9179);transform-origin:0 0;">операцией</div>
<div class="t" style="left:826.00px;top:428.60px;font-size:8.00px;line-height:8.00px;color:#2b3038;font-weight:bold;transform:scaleX(0.9114);transform-origin:0 0;">Общий простой</div>
<div class="t" style="left:892.20px;top:411.60px;font-size:8.00px;line-height:8.00px;color:#2b3038;font-weight:bold;transform:scaleX(0.9163);transform-origin:0 0;">Св</div>
<div style="left:892.30px;top:420.40px;width:12.00px;height:19.20px;border:1px solid #f0f0f0;border-left:1px dashed #ecc9a8;box-sizing:border-box;"></div>
<svg style="left:896px;top:425px" width="8" height="11" viewBox="0 0 8 11"><circle cx="3.5" cy="2.5" r="2" fill="#109a10"/><circle cx="2" cy="5.5" r="2" fill="#109a10"/><circle cx="4" cy="8.5" r="2.2" fill="#109a10"/><rect x="2" y="2" width="6" height="7" fill="#109a10"/></svg>
<div class="t" style="left:892.20px;top:444.31px;font-size:8.00px;line-height:8.00px;color:#2b3038;font-weight:bold;transform:scaleX(1.0084);transform-origin:0 0;">но</div>
<div style="left:144.00px;top:458.10px;width:748.00px;height:3.80px;background:#dfe8df;"></div>
<div style="left:144.00px;top:458.10px;width:289.90px;height:3.80px;background:#7cc57e;"></div>
<div style="left:144.00px;top:462.00px;width:748.00px;height:104.00px;background:#eb9f0a;"></div>
<div style="left:144.00px;top:495.80px;width:748.00px;height:1.10px;background:#efbe62;"></div>
<div style="left:144.00px;top:530.80px;width:748.00px;height:1.10px;background:#efbe62;"></div>
<div style="left:144.00px;top:566.00px;width:748.00px;height:5.00px;background:#ebf6d9;"></div>
<div class="t" style="left:134.60px;top:473.90px;font-size:11.50px;line-height:11.50px;color:#ee3a4a;">4</div>
<div style="left:147.90px;top:475.30px;width:8.80px;height:8.80px;border:1.2px solid #f3d9a4;box-sizing:border-box;background:transparent;border-radius:1.5px;"></div>
<svg style="left:149px;top:476.80px" width="7" height="6" viewBox="0 0 7 6"><path d="M0.8 3 L2.7 4.8 L6.2 0.8" stroke="#1f9a1f" stroke-width="1.4" fill="none"/></svg>
<div class="t" style="left:163.30px;top:475.90px;font-size:8.58px;line-height:8.58px;color:#3a3020;transform:scaleX(0.7335);transform-origin:0 0;">1</div>
<div class="t" style="left:191.00px;top:475.90px;font-size:8.58px;line-height:8.58px;color:#3a3020;transform:scaleX(1.0897);transform-origin:0 0;">–</div>
<div class="t" style="left:262.90px;top:470.90px;font-size:8.58px;line-height:8.58px;color:#2b2b2b;font-weight:bold;transform:scaleX(0.9011);transform-origin:0 0;">63443741</div>
<div class="t" style="left:262.90px;top:483.01px;font-size:6.93px;line-height:6.93px;color:#7f7361;transform:scaleX(0.9499);transform-origin:0 0;">582005-822-583205</div>
<div class="t" style="left:345.70px;top:475.90px;font-size:8.58px;line-height:8.58px;color:#3a3020;">69.5</div>
<div class="t" style="left:373.30px;top:475.90px;font-size:8.58px;line-height:8.58px;color:#3a3020;">24</div>
<div class="t" style="left:411.70px;top:475.90px;font-size:8.58px;line-height:8.58px;color:#3a3020;transform:scaleX(0.8957);transform-origin:0 0;">05.06 21:25</div>
<div class="t" style="left:483.30px;top:475.90px;font-size:8.58px;line-height:8.58px;color:#3a3020;transform:scaleX(0.8979);transform-origin:0 0;">06.06 13:06</div>
<div class="t" style="left:555.00px;top:475.90px;font-size:8.58px;line-height:8.58px;color:#3a3020;transform:scaleX(0.9107);transform-origin:0 0;">07.06 11:53</div>
<div class="t" style="left:639.60px;top:475.90px;font-size:8.36px;line-height:8.36px;color:#2b2b2b;font-weight:bold;transform:scaleX(0.8418);transform-origin:0 0;">БЕЗОП</div>
<div class="t" style="left:693.70px;top:470.40px;font-size:8.36px;line-height:8.36px;color:#3a3020;transform:scaleX(0.9131);transform-origin:0 0;">Щебень 25-60 мм</div>
<div class="t" style="left:693.70px;top:480.81px;font-size:8.36px;line-height:8.36px;color:#3a3020;">69.35 т.</div>
<div class="t" style="left:790.20px;top:475.90px;font-size:8.36px;line-height:8.36px;color:#3a3020;transform:scaleX(0.9093);transform-origin:0 0;">0 ч</div>
<div class="t" style="left:848.70px;top:470.40px;font-size:8.36px;line-height:8.36px;color:#3a3020;transform:scaleX(0.9138);transform-origin:0 0;">39 ч</div>
<div class="t" style="left:843.40px;top:480.81px;font-size:8.36px;line-height:8.36px;color:#3a3020;transform:scaleX(0.9379);transform-origin:0 0;">1д.15ч.</div>
<div style="left:147.90px;top:510.00px;width:8.80px;height:8.80px;border:1.2px solid #f3d9a4;box-sizing:border-box;background:transparent;border-radius:1.5px;"></div>
<svg style="left:149px;top:511.50px" width="7" height="6" viewBox="0 0 7 6"><path d="M0.8 3 L2.7 4.8 L6.2 0.8" stroke="#1f9a1f" stroke-width="1.4" fill="none"/></svg>
<div class="t" style="left:163.30px;top:510.60px;font-size:8.58px;line-height:8.58px;color:#3a3020;transform:scaleX(0.7335);transform-origin:0 0;">2</div>
<div class="t" style="left:191.00px;top:510.60px;font-size:8.58px;line-height:8.58px;color:#3a3020;transform:scaleX(1.0897);transform-origin:0 0;">–</div>
<div class="t" style="left:262.90px;top:505.60px;font-size:8.58px;line-height:8.58px;color:#2b2b2b;font-weight:bold;transform:scaleX(0.9011);transform-origin:0 0;">63528210</div>
<div class="t" style="left:262.90px;top:517.72px;font-size:6.93px;line-height:6.93px;color:#7f7361;transform:scaleX(0.9499);transform-origin:0 0;">582005-822-583205</div>
<div class="t" style="left:345.70px;top:510.60px;font-size:8.58px;line-height:8.58px;color:#3a3020;">69.5</div>
<div class="t" style="left:373.30px;top:510.60px;font-size:8.58px;line-height:8.58px;color:#3a3020;">24.1</div>
<div class="t" style="left:411.70px;top:510.60px;font-size:8.58px;line-height:8.58px;color:#3a3020;transform:scaleX(0.8957);transform-origin:0 0;">05.06 21:25</div>
<div class="t" style="left:483.30px;top:510.60px;font-size:8.58px;line-height:8.58px;color:#3a3020;transform:scaleX(0.8979);transform-origin:0 0;">06.06 13:06</div>
<div class="t" style="left:555.00px;top:510.60px;font-size:8.58px;line-height:8.58px;color:#3a3020;transform:scaleX(0.9107);transform-origin:0 0;">07.06 11:53</div>
<div class="t" style="left:639.60px;top:510.60px;font-size:8.36px;line-height:8.36px;color:#2b2b2b;font-weight:bold;transform:scaleX(0.8418);transform-origin:0 0;">БЕЗОП</div>
<div class="t" style="left:693.70px;top:505.10px;font-size:8.36px;line-height:8.36px;color:#3a3020;transform:scaleX(0.9131);transform-origin:0 0;">Щебень 25-60 мм</div>
<div class="t" style="left:693.70px;top:515.50px;font-size:8.36px;line-height:8.36px;color:#3a3020;">69.3 т.</div>
<div class="t" style="left:790.20px;top:510.60px;font-size:8.36px;line-height:8.36px;color:#3a3020;transform:scaleX(0.9093);transform-origin:0 0;">0 ч</div>
<div class="t" style="left:848.70px;top:505.10px;font-size:8.36px;line-height:8.36px;color:#3a3020;transform:scaleX(0.9138);transform-origin:0 0;">39 ч</div>
<div class="t" style="left:843.40px;top:515.50px;font-size:8.36px;line-height:8.36px;color:#3a3020;transform:scaleX(0.9379);transform-origin:0 0;">1д.15ч.</div>
<div style="left:147.90px;top:544.70px;width:8.80px;height:8.80px;border:1.2px solid #f3d9a4;box-sizing:border-box;background:transparent;border-radius:1.5px;"></div>
<svg style="left:149px;top:546.20px" width="7" height="6" viewBox="0 0 7 6"><path d="M0.8 3 L2.7 4.8 L6.2 0.8" stroke="#1f9a1f" stroke-width="1.4" fill="none"/></svg>
<div class="t" style="left:163.30px;top:545.31px;font-size:8.58px;line-height:8.58px;color:#3a3020;transform:scaleX(0.7335);transform-origin:0 0;">3</div>
<div class="t" style="left:191.00px;top:545.31px;font-size:8.58px;line-height:8.58px;color:#3a3020;transform:scaleX(1.0897);transform-origin:0 0;">–</div>
<div class="t" style="left:262.90px;top:540.31px;font-size:8.58px;line-height:8.58px;color:#2b2b2b;font-weight:bold;transform:scaleX(0.9011);transform-origin:0 0;">62273677</div>
<div class="t" style="left:262.90px;top:552.41px;font-size:6.93px;line-height:6.93px;color:#7f7361;transform:scaleX(0.9499);transform-origin:0 0;">582005-822-583205</div>
<div class="t" style="left:345.70px;top:545.31px;font-size:8.58px;line-height:8.58px;color:#3a3020;">75</div>
<div class="t" style="left:373.30px;top:545.31px;font-size:8.58px;line-height:8.58px;color:#3a3020;">24.6</div>
<div class="t" style="left:411.70px;top:545.31px;font-size:8.58px;line-height:8.58px;color:#3a3020;transform:scaleX(0.8957);transform-origin:0 0;">05.06 21:25</div>
<div class="t" style="left:483.30px;top:545.31px;font-size:8.58px;line-height:8.58px;color:#3a3020;transform:scaleX(0.8979);transform-origin:0 0;">06.06 13:06</div>
<div class="t" style="left:555.00px;top:545.31px;font-size:8.58px;line-height:8.58px;color:#3a3020;transform:scaleX(0.9107);transform-origin:0 0;">07.06 11:53</div>
<div class="t" style="left:639.60px;top:545.31px;font-size:8.36px;line-height:8.36px;color:#2b2b2b;font-weight:bold;transform:scaleX(0.8418);transform-origin:0 0;">БЕЗОП</div>
<div class="t" style="left:693.70px;top:539.81px;font-size:8.36px;line-height:8.36px;color:#3a3020;transform:scaleX(0.9131);transform-origin:0 0;">Щебень 25-60 мм</div>
<div class="t" style="left:693.70px;top:550.21px;font-size:8.36px;line-height:8.36px;color:#3a3020;">74.75 т.</div>
<div class="t" style="left:790.20px;top:545.31px;font-size:8.36px;line-height:8.36px;color:#3a3020;transform:scaleX(0.9093);transform-origin:0 0;">0 ч</div>
<div class="t" style="left:848.70px;top:539.81px;font-size:8.36px;line-height:8.36px;color:#3a3020;transform:scaleX(0.9138);transform-origin:0 0;">39 ч</div>
<div class="t" style="left:843.40px;top:550.21px;font-size:8.36px;line-height:8.36px;color:#3a3020;transform:scaleX(0.9379);transform-origin:0 0;">1д.15ч.</div>
</body></html>
